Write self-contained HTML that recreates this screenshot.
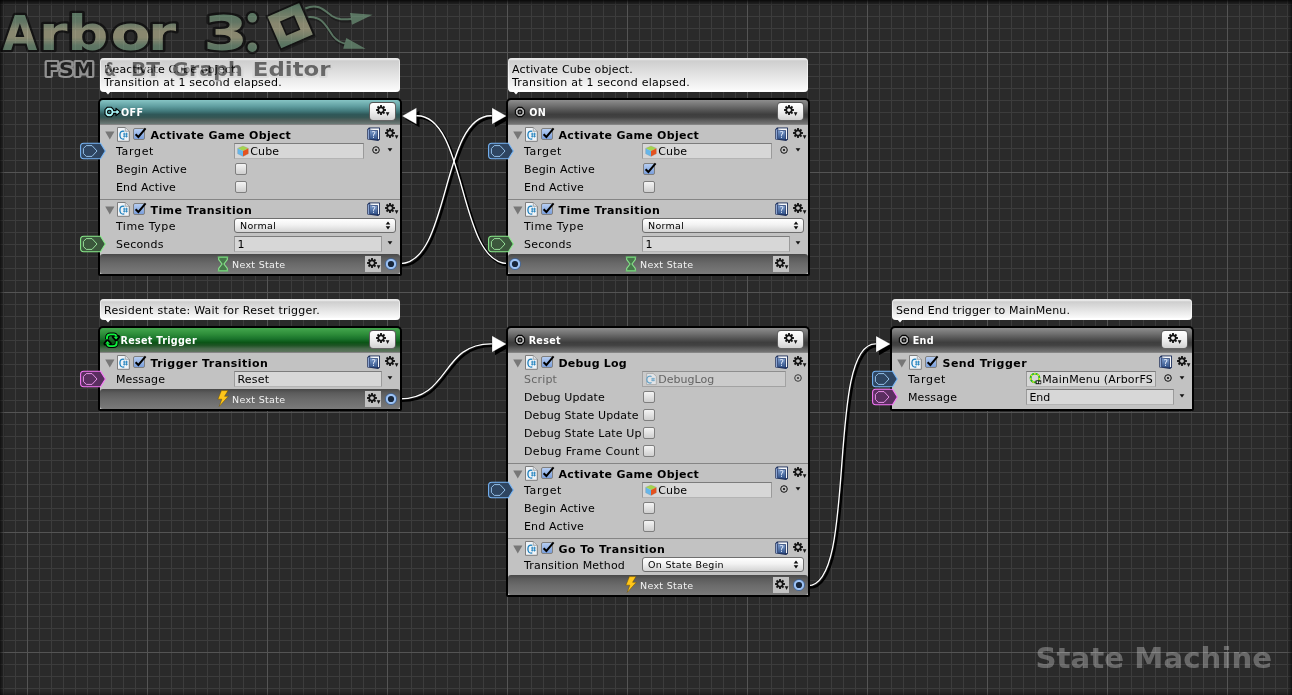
<!DOCTYPE html>
<html lang="en"><head><meta charset="utf-8"><title>Arbor 3 - State Machine</title>
<style>
html,body{margin:0;padding:0;}
body{width:1292px;height:695px;overflow:hidden;background:#2a2a2a;font-family:"DejaVu Sans","Liberation Sans",sans-serif;font-size:11px;color:#000;position:relative;}
#grid{position:absolute;left:0;top:0;width:1292px;height:695px;
 background-color:#2a2a2a;
 background-image:
  linear-gradient(to right, #545454 1px, transparent 1px),
  linear-gradient(to bottom, #545454 1px, transparent 1px),
  linear-gradient(to right, #3c3c3c 1px, transparent 1px),
  linear-gradient(to bottom, #3c3c3c 1px, transparent 1px);
 background-size:120px 120px,120px 120px,12px 12px,12px 12px;
 background-position:27px 0,0 52px,3px 0,0 4px;
}
#vig{position:absolute;left:0;top:0;width:1292px;height:695px;pointer-events:none;background:linear-gradient(to bottom,rgba(0,0,0,0.78) 0,rgba(0,0,0,0.45) 2px,rgba(0,0,0,0) 6px),linear-gradient(to right,rgba(0,0,0,0.6) 0,rgba(0,0,0,0.3) 2px,rgba(0,0,0,0) 5px),linear-gradient(to left,rgba(0,0,0,0.55) 0,rgba(0,0,0,0.25) 2px,rgba(0,0,0,0) 5px),linear-gradient(to top,rgba(0,0,0,0.3) 0,rgba(0,0,0,0) 4px);}
#root{position:absolute;left:0;top:0;width:1292px;height:695px;will-change:transform;}
.abs{position:absolute;}
.node{position:absolute;background:#000;border-radius:5px 5px 2px 2px;}
.hdr{position:absolute;left:2px;top:2px;width:300px;height:24px;border-radius:3px 3px 0 0;}
.hdr.gray{background:linear-gradient(to bottom,#8e8e8e 0%,#6e6e6e 25%,#4b4b4b 50%,#3e3e3e 60%,#424242 72%,#5e5e5e 86%,#747474 100%);}
.hdr.teal{background:linear-gradient(to bottom,#86c4c4 0%,#62a0a2 25%,#427a7c 46%,#2f5859 60%,#355654 72%,#55625f 86%,#6c7a77 100%);}
.hdr.green{background:linear-gradient(to bottom,#44a64e 0%,#2e8e3a 25%,#19722b 46%,#0b5516 60%,#1d5323 72%,#496a4c 86%,#5f755f 100%);}
.ttl{position:absolute;top:0;height:24px;line-height:26.6px;color:#fff;font-size:9.6px;font-weight:bold;white-space:nowrap;letter-spacing:0.3px;}
.body{position:absolute;left:2px;top:26px;width:300px;background:#c2c2c2;}
.sep{position:absolute;left:0;width:300px;height:1px;background:#858585;}
.btitle{position:absolute;left:52.5px;font-size:11px;font-weight:bold;line-height:18px;height:18px;white-space:nowrap;letter-spacing:0.4px;}
.lbl{position:absolute;left:18px;font-size:11px;line-height:18px;height:18px;white-space:nowrap;}
.lbl.dis{color:#666;}
.fld{position:absolute;box-sizing:border-box;height:16px;border:1px solid #9a9a9a;border-top-color:#7c7c7c;border-bottom-color:#b4b4b4;background:#d7d7d7;font-size:11px;line-height:16px;white-space:nowrap;overflow:hidden;}
.fld.dis{color:#646464;background:#cbcbcb;border-color:#a2a2a2;border-top-color:#8e8e8e;}
.pop{position:absolute;box-sizing:border-box;height:15px;border:1px solid #6e6e6e;border-radius:3px;background:linear-gradient(to bottom,#ffffff 0%,#f2f2f2 45%,#d4d4d4 100%);font-size:9.5px;line-height:13px;white-space:nowrap;padding-left:5px;}
.cb{position:absolute;box-sizing:border-box;width:12px;height:12px;border:1px solid #7f7f7f;border-radius:2px;background:linear-gradient(to bottom,#f4f4f4,#cfcfcf);}
.cbb{position:absolute;box-sizing:border-box;width:12px;height:12px;border:1px solid #7f7f7f;border-radius:2px;background:linear-gradient(to bottom,#b5cdf2,#7a9fdc);}
.ftr{position:absolute;left:2px;width:300px;height:20px;border-radius:3px;background:linear-gradient(to bottom,#484848 0%,#5c5c5c 20%,#6a6a6a 50%,#7a7a7a 100%);}
.ftxt{position:absolute;top:0;height:20px;line-height:22px;font-size:9.5px;color:#f2f2f2;white-space:nowrap;}
.gbtn{position:absolute;box-sizing:border-box;width:27px;height:19px;border:1px solid rgba(0,0,0,0.6);border-radius:4px;background:linear-gradient(to bottom,#ffffff 0%,#f0f0f0 50%,#d2d2d2 100%);}
.gbox{position:absolute;width:16px;height:16px;background:#c2c2c2;}
.cmt{position:absolute;box-sizing:border-box;border-radius:4px;background:linear-gradient(to bottom,#e9e9e9 0,#e6e6e6 1.6px,#cecece 2.8px,#f9f9f9 calc(100% - 2.5px),#ffffff calc(100% - 1.5px),#fdfdfd 100%);border:0;box-shadow:inset 1px 0 0 rgba(255,255,255,0.55),inset -1px 0 0 rgba(255,255,255,0.55);font-size:11px;line-height:13px;white-space:nowrap;color:#000;}
.cmt span{position:absolute;left:4px;}
svg{position:absolute;overflow:visible;}
</style></head>
<body>
<div id="root">
<div id="grid"></div>
<svg class="abs" width="0" height="0" style="left:0;top:0"><defs><linearGradient id="hb" x1="0" y1="0" x2="0" y2="1"><stop offset="0" stop-color="#7d9ccb"/><stop offset="1" stop-color="#31528a"/></linearGradient></defs></svg>
<div class="cmt" style="left:100px;top:58px;width:300px;height:34px"><span style="top:5px;letter-spacing:0.107px">Deactivate Cube object.</span><span style="top:18px;letter-spacing:0.225px">Transition at 1 second elapsed.</span></div><svg class="abs" style="left:105px;top:91px" width="7" height="5" viewBox="0 0 7 5"><path d="M0 0 H6 L3 3.6 Z" fill="#fff"/></svg>
<div class="cmt" style="left:508px;top:58px;width:300px;height:34px"><span style="top:5px;letter-spacing:0.147px">Activate Cube object.</span><span style="top:18px;letter-spacing:0.225px">Transition at 1 second elapsed.</span></div><svg class="abs" style="left:513px;top:91px" width="7" height="5" viewBox="0 0 7 5"><path d="M0 0 H6 L3 3.6 Z" fill="#fff"/></svg>
<div class="cmt" style="left:100px;top:299px;width:300px;height:21px"><span style="top:5px;letter-spacing:0.242px">Resident state: Wait for Reset trigger.</span></div><svg class="abs" style="left:105px;top:319px" width="7" height="5" viewBox="0 0 7 5"><path d="M0 0 H6 L3 3.6 Z" fill="#fff"/></svg>
<div class="cmt" style="left:892px;top:299px;width:300px;height:21px"><span style="top:5px;letter-spacing:0.113px">Send End trigger to MainMenu.</span></div><svg class="abs" style="left:897px;top:319px" width="7" height="5" viewBox="0 0 7 5"><path d="M0 0 H6 L3 3.6 Z" fill="#fff"/></svg>
<svg class="abs" style="left:0;top:0" width="1292" height="695" viewBox="0 0 1292 695"><g transform="translate(1.9,2.1)" fill="none" stroke="#000" stroke-width="2.3"><path d="M400 263.6 C450 263.6 441 115.8 491 115.8 H493"/><path d="M508 263.6 C458 263.6 467 115.8 417 115.8 H415"/><path d="M400 398.8 C450 398.8 441 343.8 491 343.8 H493"/><path d="M808 585.6 C858 585.6 825.5 343.9 875.5 343.9 H877"/></g><g transform="translate(3,3)" fill="#000"><path d="M506.5 116 L492.0 107.8 V124.2 Z"/><path d="M402 116 L416.5 107.8 V124.2 Z"/><path d="M506.5 344 L492.0 335.8 V352.2 Z"/><path d="M890.5 344.1 L876.0 335.90000000000003 V352.3 Z"/></g><g fill="none" stroke="#000" stroke-width="2.4" opacity="0.45"><path d="M400 263.6 C450 263.6 441 115.8 491 115.8 H493"/><path d="M508 263.6 C458 263.6 467 115.8 417 115.8 H415"/><path d="M400 398.8 C450 398.8 441 343.8 491 343.8 H493"/><path d="M808 585.6 C858 585.6 825.5 343.9 875.5 343.9 H877"/></g><g fill="none" stroke="#fff" stroke-width="1.35"><path d="M400 263.6 C450 263.6 441 115.8 491 115.8 H493"/><path d="M508 263.6 C458 263.6 467 115.8 417 115.8 H415"/><path d="M400 398.8 C450 398.8 441 343.8 491 343.8 H493"/><path d="M808 585.6 C858 585.6 825.5 343.9 875.5 343.9 H877"/></g><g fill="#fff" stroke="#000" stroke-opacity="0.35" stroke-width="0.6"><path d="M506.5 116 L492.0 107.8 V124.2 Z"/><path d="M402 116 L416.5 107.8 V124.2 Z"/><path d="M506.5 344 L492.0 335.8 V352.2 Z"/><path d="M890.5 344.1 L876.0 335.90000000000003 V352.3 Z"/></g></svg>
<div class="node" style="left:98px;top:98px;width:304px;height:178px"><div class="hdr teal"></div><svg class="abs" style="left:5.5px;top:8px" width="18" height="12" viewBox="0 0 18 12"><path d="M3.4 1.2 H7.2 L9.6 3.6 V4.6 H12 V2.4 L16.4 6 L12 9.6 V7.4 H9.6 V8.4 L7.2 10.8 H3.4 L1 8.4 V3.6 Z" fill="#a6f3f5" stroke="#000" stroke-width="1.1" stroke-linejoin="round"/><circle cx="5.3" cy="6" r="1.8" fill="#3f8487" stroke="#000" stroke-width="1.1"/></svg><div class="ttl" style="left:23.1px;top:2px">OFF</div><div class="gbtn" style="left:271px;top:4px"></div><svg class="abs" style="left:276px;top:5px" width="18" height="16" viewBox="-7 -7 18 16"><g fill="#141414"><rect x="-0.95" y="-4.95" width="1.9" height="2.4" transform="rotate(0)"/><rect x="-0.95" y="-4.95" width="1.9" height="2.4" transform="rotate(45)"/><rect x="-0.95" y="-4.95" width="1.9" height="2.4" transform="rotate(90)"/><rect x="-0.95" y="-4.95" width="1.9" height="2.4" transform="rotate(135)"/><rect x="-0.95" y="-4.95" width="1.9" height="2.4" transform="rotate(180)"/><rect x="-0.95" y="-4.95" width="1.9" height="2.4" transform="rotate(225)"/><rect x="-0.95" y="-4.95" width="1.9" height="2.4" transform="rotate(270)"/><rect x="-0.95" y="-4.95" width="1.9" height="2.4" transform="rotate(315)"/></g><circle r="2.7" fill="none" stroke="#141414" stroke-width="1.7"/><path d="M4.8 2.2h3.6l-1.8 3.7z" fill="#141414"/></svg><div class="body" style="height:150px"></div><div class="sep" style="left:2px;top:26px"></div><svg class="abs" style="left:7px;top:33px" width="10" height="9" viewBox="0 0 10 9"><path d="M0.2 0.4 H9.4 L4.8 8.6 Z" fill="#777"/></svg><svg class="abs" style="left:19px;top:29px" width="13" height="15" viewBox="0 0 13 15"><path d="M0.5 0.5 H8.3 L12.3 4.3 V14.3 H0.5 Z" fill="#eff3f7" stroke="#7e7e7e" stroke-width="1"/><path d="M8.3 0.6 V4.3 H12.2" fill="#dde2e8" stroke="#9a9a9a" stroke-width="0.8"/><path d="M7.3 4.3 Q2.9 3.4 2.9 8 Q2.9 12.8 7.3 11.9" fill="none" stroke="#1b7fbd" stroke-width="1.3"/><path d="M7.3 5.7 V10.5 M9.5 5.7 V10.5 M6 7 H10.9 M6 9.2 H10.9" fill="none" stroke="#1b7fbd" stroke-width="0.8"/></svg><div class="cbb" style="left:35px;top:30px"></div><svg class="abs" style="left:35px;top:28px" width="15" height="15" viewBox="0 0 15 15"><path d="M2.6 8.2 L5.4 11 L12.6 2.4" fill="none" stroke="#000" stroke-width="2"/></svg><div class="btitle" style="top:29px;letter-spacing:0.3px">Activate Game Object</div><svg class="abs" style="left:268.6px;top:29px" width="14" height="15" viewBox="0 0 14 15"><path d="M2 0.5 H12.4 Q13 0.5 13 1.1 V12.6 L11.2 13.9 L0.9 12.6 Q0.3 12.5 0.3 11.9 V2.2 Z" fill="#1a2c58"/><path d="M3.2 1.4 H12.1 V12.1 H3.2 Z" fill="#f6f8fb"/><path d="M1.2 2.7 L2.5 1.7 V12.3 L1.2 11.9 Z" fill="#a9c6f3"/><path d="M2.5 2.7 L10.9 3.2 V13 L2.5 12.2 Z" fill="#1a2c58"/><path d="M3 3.3 L10.3 3.8 V12.4 L3 11.7 Z" fill="url(#hb)"/><text x="6.7" y="10.9" font-family="DejaVu Sans, sans-serif" font-size="8.2" fill="#e9effb" text-anchor="middle">?</text></svg><svg class="abs" style="left:285px;top:28px" width="18" height="16" viewBox="-7 -7 18 16"><g fill="#141414"><rect x="-0.95" y="-4.95" width="1.9" height="2.4" transform="rotate(0)"/><rect x="-0.95" y="-4.95" width="1.9" height="2.4" transform="rotate(45)"/><rect x="-0.95" y="-4.95" width="1.9" height="2.4" transform="rotate(90)"/><rect x="-0.95" y="-4.95" width="1.9" height="2.4" transform="rotate(135)"/><rect x="-0.95" y="-4.95" width="1.9" height="2.4" transform="rotate(180)"/><rect x="-0.95" y="-4.95" width="1.9" height="2.4" transform="rotate(225)"/><rect x="-0.95" y="-4.95" width="1.9" height="2.4" transform="rotate(270)"/><rect x="-0.95" y="-4.95" width="1.9" height="2.4" transform="rotate(315)"/></g><circle r="2.7" fill="none" stroke="#141414" stroke-width="1.7"/><path d="M4.8 2.2h3.6l-1.8 3.7z" fill="#141414"/></svg><div class="lbl" style="top:45px;letter-spacing:0.681px">Target</div><svg class="abs" style="left:-18px;top:44px" width="27" height="18" viewBox="0 0 27 18"><path d="M3.6 1.3 H20.5 L25.3 9 L20.5 16.7 H3.6 Q0.6 16.7 0.6 13.7 V4.3 Q0.6 1.3 3.6 1.3 Z" fill="#2e4561" stroke="#78b8fa" stroke-width="1.05"/><path d="M6.3 3.6 H12 L17 9 L12 14.4 H6.3 L3.4 11.5 V6.5 Z" fill="none" stroke="#a6d6ff" stroke-width="0.85"/></svg><div class="fld" style="left:136px;top:45px;width:130px"><svg class="abs" style="left:2px;top:1px" width="12" height="12" viewBox="0 0 12 12"><path d="M6 1 L11.4 3.3 L6 5.9 L0.6 3.3 Z" fill="#a4d44e"/><path d="M0.6 3.3 L6 5.9 V11.4 L0.6 8.7 Z" fill="#66b6ea"/><path d="M11.4 3.3 L6 5.9 V11.4 L11.4 8.7 Z" fill="#e4521f"/><path d="M6 1 L11.4 3.3 V8.7 L6 11.4 L0.6 8.7 V3.3 Z" fill="none" stroke="#8a8a8a" stroke-opacity="0.5" stroke-width="0.5"/></svg><span style="position:absolute;left:15.2px;top:0;letter-spacing:0.148px">Cube</span></div><svg class="abs" style="left:272.5px;top:47.4px" width="10" height="10" viewBox="-5 -5 10 10"><circle r="3.3" fill="none" stroke="#111" stroke-width="1"/><circle r="1.1" fill="#111"/></svg><svg class="abs" style="left:288.6px;top:49.6px" width="6" height="4" viewBox="0 0 6 4"><path d="M0.6 0.3 H5.4 L3 3.6 Z" fill="#111"/></svg><div class="lbl" style="top:63px;letter-spacing:0.177px">Begin Active</div><div class="cb" style="left:137px;top:65px"></div><div class="lbl" style="top:81px;letter-spacing:0.155px">End Active</div><div class="cb" style="left:137px;top:83px"></div><div class="sep" style="left:2px;top:101px"></div><svg class="abs" style="left:7px;top:108px" width="10" height="9" viewBox="0 0 10 9"><path d="M0.2 0.4 H9.4 L4.8 8.6 Z" fill="#777"/></svg><svg class="abs" style="left:19px;top:104px" width="13" height="15" viewBox="0 0 13 15"><path d="M0.5 0.5 H8.3 L12.3 4.3 V14.3 H0.5 Z" fill="#eff3f7" stroke="#7e7e7e" stroke-width="1"/><path d="M8.3 0.6 V4.3 H12.2" fill="#dde2e8" stroke="#9a9a9a" stroke-width="0.8"/><path d="M7.3 4.3 Q2.9 3.4 2.9 8 Q2.9 12.8 7.3 11.9" fill="none" stroke="#1b7fbd" stroke-width="1.3"/><path d="M7.3 5.7 V10.5 M9.5 5.7 V10.5 M6 7 H10.9 M6 9.2 H10.9" fill="none" stroke="#1b7fbd" stroke-width="0.8"/></svg><div class="cbb" style="left:35px;top:105px"></div><svg class="abs" style="left:35px;top:103px" width="15" height="15" viewBox="0 0 15 15"><path d="M2.6 8.2 L5.4 11 L12.6 2.4" fill="none" stroke="#000" stroke-width="2"/></svg><div class="btitle" style="top:104px;letter-spacing:0.4px">Time Transition</div><svg class="abs" style="left:268.6px;top:104px" width="14" height="15" viewBox="0 0 14 15"><path d="M2 0.5 H12.4 Q13 0.5 13 1.1 V12.6 L11.2 13.9 L0.9 12.6 Q0.3 12.5 0.3 11.9 V2.2 Z" fill="#1a2c58"/><path d="M3.2 1.4 H12.1 V12.1 H3.2 Z" fill="#f6f8fb"/><path d="M1.2 2.7 L2.5 1.7 V12.3 L1.2 11.9 Z" fill="#a9c6f3"/><path d="M2.5 2.7 L10.9 3.2 V13 L2.5 12.2 Z" fill="#1a2c58"/><path d="M3 3.3 L10.3 3.8 V12.4 L3 11.7 Z" fill="url(#hb)"/><text x="6.7" y="10.9" font-family="DejaVu Sans, sans-serif" font-size="8.2" fill="#e9effb" text-anchor="middle">?</text></svg><svg class="abs" style="left:285px;top:103px" width="18" height="16" viewBox="-7 -7 18 16"><g fill="#141414"><rect x="-0.95" y="-4.95" width="1.9" height="2.4" transform="rotate(0)"/><rect x="-0.95" y="-4.95" width="1.9" height="2.4" transform="rotate(45)"/><rect x="-0.95" y="-4.95" width="1.9" height="2.4" transform="rotate(90)"/><rect x="-0.95" y="-4.95" width="1.9" height="2.4" transform="rotate(135)"/><rect x="-0.95" y="-4.95" width="1.9" height="2.4" transform="rotate(180)"/><rect x="-0.95" y="-4.95" width="1.9" height="2.4" transform="rotate(225)"/><rect x="-0.95" y="-4.95" width="1.9" height="2.4" transform="rotate(270)"/><rect x="-0.95" y="-4.95" width="1.9" height="2.4" transform="rotate(315)"/></g><circle r="2.7" fill="none" stroke="#141414" stroke-width="1.7"/><path d="M4.8 2.2h3.6l-1.8 3.7z" fill="#141414"/></svg><div class="lbl" style="top:120px;letter-spacing:0.479px">Time Type</div><div class="pop" style="left:136px;top:120px;width:162px;letter-spacing:0.3px">Normal</div><svg class="abs" style="left:287.2px;top:123.3px" width="6" height="9" viewBox="0 0 6 9"><path d="M0.7 3.6 H5.3 L3 0.4 Z M0.7 5.2 H5.3 L3 8.4 Z" fill="#0c0c0c"/></svg><div class="lbl" style="top:138px;letter-spacing:0.197px">Seconds</div><svg class="abs" style="left:-18px;top:137px" width="27" height="18" viewBox="0 0 27 18"><path d="M3.6 1.3 H20.5 L25.3 9 L20.5 16.7 H3.6 Q0.6 16.7 0.6 13.7 V4.3 Q0.6 1.3 3.6 1.3 Z" fill="#3b573c" stroke="#8aee8c" stroke-width="1.05"/><path d="M6.3 3.6 H12 L17 9 L12 14.4 H6.3 L3.4 11.5 V6.5 Z" fill="none" stroke="#a8f8aa" stroke-width="0.85"/></svg><div class="fld" style="left:136px;top:138px;width:148px"><span style="position:absolute;left:2.4px;top:0;letter-spacing:0.0px">1</span></div><svg class="abs" style="left:288.6px;top:142.6px" width="6" height="4" viewBox="0 0 6 4"><path d="M0.6 0.3 H5.4 L3 3.6 Z" fill="#111"/></svg><div class="ftr" style="top:156px"></div><svg class="abs" style="left:119px;top:157.5px" width="12" height="16" viewBox="0 0 12 16"><path d="M1.7 1.3 H10.3 V3.6 L6.9 8 L10.3 12.4 V14.7 H1.7 V12.4 L5.1 8 L1.7 3.6 Z" fill="#47794b" stroke="#86e68a" stroke-width="1.1" stroke-linejoin="round"/><path d="M0.6 1 H11.4 M0.6 15 H11.4" stroke="#62bd69" stroke-width="1"/></svg><div class="ftxt" style="left:134px;top:156px;letter-spacing:0.3px">Next State</div><div class="gbox" style="left:267px;top:158px"></div><svg class="abs" style="left:267px;top:158px" width="18" height="16" viewBox="-7 -7 18 16"><g fill="#141414"><rect x="-0.95" y="-4.95" width="1.9" height="2.4" transform="rotate(0)"/><rect x="-0.95" y="-4.95" width="1.9" height="2.4" transform="rotate(45)"/><rect x="-0.95" y="-4.95" width="1.9" height="2.4" transform="rotate(90)"/><rect x="-0.95" y="-4.95" width="1.9" height="2.4" transform="rotate(135)"/><rect x="-0.95" y="-4.95" width="1.9" height="2.4" transform="rotate(180)"/><rect x="-0.95" y="-4.95" width="1.9" height="2.4" transform="rotate(225)"/><rect x="-0.95" y="-4.95" width="1.9" height="2.4" transform="rotate(270)"/><rect x="-0.95" y="-4.95" width="1.9" height="2.4" transform="rotate(315)"/></g><circle r="2.7" fill="none" stroke="#141414" stroke-width="1.7"/><path d="M4.8 2.2h3.6l-1.8 3.7z" fill="#141414"/></svg><svg class="abs" style="left:286px;top:159px" width="14" height="14" viewBox="-7 -7 14 14"><circle r="5.6" fill="#9dc3f5" stroke="#3a5a8a" stroke-width="0.8"/><circle r="3.1" fill="#18263a"/></svg></div>
<div class="node" style="left:506px;top:98px;width:304px;height:178px"><div class="hdr gray"></div><svg class="abs" style="left:8px;top:8px" width="12" height="12" viewBox="-6 -6 12 12"><polygon points="4.62,1.91 1.91,4.62 -1.91,4.62 -4.62,1.91 -4.62,-1.91 -1.91,-4.62 1.91,-4.62 4.62,-1.91" fill="#b6b6b6" stroke="#050505" stroke-width="1.1" stroke-linejoin="round"/><circle r="1.9" fill="#6e6e6e" stroke="#050505" stroke-width="1.2"/></svg><div class="ttl" style="left:23.2px;top:2px">ON</div><div class="gbtn" style="left:271px;top:4px"></div><svg class="abs" style="left:276px;top:5px" width="18" height="16" viewBox="-7 -7 18 16"><g fill="#141414"><rect x="-0.95" y="-4.95" width="1.9" height="2.4" transform="rotate(0)"/><rect x="-0.95" y="-4.95" width="1.9" height="2.4" transform="rotate(45)"/><rect x="-0.95" y="-4.95" width="1.9" height="2.4" transform="rotate(90)"/><rect x="-0.95" y="-4.95" width="1.9" height="2.4" transform="rotate(135)"/><rect x="-0.95" y="-4.95" width="1.9" height="2.4" transform="rotate(180)"/><rect x="-0.95" y="-4.95" width="1.9" height="2.4" transform="rotate(225)"/><rect x="-0.95" y="-4.95" width="1.9" height="2.4" transform="rotate(270)"/><rect x="-0.95" y="-4.95" width="1.9" height="2.4" transform="rotate(315)"/></g><circle r="2.7" fill="none" stroke="#141414" stroke-width="1.7"/><path d="M4.8 2.2h3.6l-1.8 3.7z" fill="#141414"/></svg><div class="body" style="height:150px"></div><div class="sep" style="left:2px;top:26px"></div><svg class="abs" style="left:7px;top:33px" width="10" height="9" viewBox="0 0 10 9"><path d="M0.2 0.4 H9.4 L4.8 8.6 Z" fill="#777"/></svg><svg class="abs" style="left:19px;top:29px" width="13" height="15" viewBox="0 0 13 15"><path d="M0.5 0.5 H8.3 L12.3 4.3 V14.3 H0.5 Z" fill="#eff3f7" stroke="#7e7e7e" stroke-width="1"/><path d="M8.3 0.6 V4.3 H12.2" fill="#dde2e8" stroke="#9a9a9a" stroke-width="0.8"/><path d="M7.3 4.3 Q2.9 3.4 2.9 8 Q2.9 12.8 7.3 11.9" fill="none" stroke="#1b7fbd" stroke-width="1.3"/><path d="M7.3 5.7 V10.5 M9.5 5.7 V10.5 M6 7 H10.9 M6 9.2 H10.9" fill="none" stroke="#1b7fbd" stroke-width="0.8"/></svg><div class="cbb" style="left:35px;top:30px"></div><svg class="abs" style="left:35px;top:28px" width="15" height="15" viewBox="0 0 15 15"><path d="M2.6 8.2 L5.4 11 L12.6 2.4" fill="none" stroke="#000" stroke-width="2"/></svg><div class="btitle" style="top:29px;letter-spacing:0.3px">Activate Game Object</div><svg class="abs" style="left:268.6px;top:29px" width="14" height="15" viewBox="0 0 14 15"><path d="M2 0.5 H12.4 Q13 0.5 13 1.1 V12.6 L11.2 13.9 L0.9 12.6 Q0.3 12.5 0.3 11.9 V2.2 Z" fill="#1a2c58"/><path d="M3.2 1.4 H12.1 V12.1 H3.2 Z" fill="#f6f8fb"/><path d="M1.2 2.7 L2.5 1.7 V12.3 L1.2 11.9 Z" fill="#a9c6f3"/><path d="M2.5 2.7 L10.9 3.2 V13 L2.5 12.2 Z" fill="#1a2c58"/><path d="M3 3.3 L10.3 3.8 V12.4 L3 11.7 Z" fill="url(#hb)"/><text x="6.7" y="10.9" font-family="DejaVu Sans, sans-serif" font-size="8.2" fill="#e9effb" text-anchor="middle">?</text></svg><svg class="abs" style="left:285px;top:28px" width="18" height="16" viewBox="-7 -7 18 16"><g fill="#141414"><rect x="-0.95" y="-4.95" width="1.9" height="2.4" transform="rotate(0)"/><rect x="-0.95" y="-4.95" width="1.9" height="2.4" transform="rotate(45)"/><rect x="-0.95" y="-4.95" width="1.9" height="2.4" transform="rotate(90)"/><rect x="-0.95" y="-4.95" width="1.9" height="2.4" transform="rotate(135)"/><rect x="-0.95" y="-4.95" width="1.9" height="2.4" transform="rotate(180)"/><rect x="-0.95" y="-4.95" width="1.9" height="2.4" transform="rotate(225)"/><rect x="-0.95" y="-4.95" width="1.9" height="2.4" transform="rotate(270)"/><rect x="-0.95" y="-4.95" width="1.9" height="2.4" transform="rotate(315)"/></g><circle r="2.7" fill="none" stroke="#141414" stroke-width="1.7"/><path d="M4.8 2.2h3.6l-1.8 3.7z" fill="#141414"/></svg><div class="lbl" style="top:45px;letter-spacing:0.681px">Target</div><svg class="abs" style="left:-18px;top:44px" width="27" height="18" viewBox="0 0 27 18"><path d="M3.6 1.3 H20.5 L25.3 9 L20.5 16.7 H3.6 Q0.6 16.7 0.6 13.7 V4.3 Q0.6 1.3 3.6 1.3 Z" fill="#2e4561" stroke="#78b8fa" stroke-width="1.05"/><path d="M6.3 3.6 H12 L17 9 L12 14.4 H6.3 L3.4 11.5 V6.5 Z" fill="none" stroke="#a6d6ff" stroke-width="0.85"/></svg><div class="fld" style="left:136px;top:45px;width:130px"><svg class="abs" style="left:2px;top:1px" width="12" height="12" viewBox="0 0 12 12"><path d="M6 1 L11.4 3.3 L6 5.9 L0.6 3.3 Z" fill="#a4d44e"/><path d="M0.6 3.3 L6 5.9 V11.4 L0.6 8.7 Z" fill="#66b6ea"/><path d="M11.4 3.3 L6 5.9 V11.4 L11.4 8.7 Z" fill="#e4521f"/><path d="M6 1 L11.4 3.3 V8.7 L6 11.4 L0.6 8.7 V3.3 Z" fill="none" stroke="#8a8a8a" stroke-opacity="0.5" stroke-width="0.5"/></svg><span style="position:absolute;left:15.2px;top:0;letter-spacing:0.148px">Cube</span></div><svg class="abs" style="left:272.5px;top:47.4px" width="10" height="10" viewBox="-5 -5 10 10"><circle r="3.3" fill="none" stroke="#111" stroke-width="1"/><circle r="1.1" fill="#111"/></svg><svg class="abs" style="left:288.6px;top:49.6px" width="6" height="4" viewBox="0 0 6 4"><path d="M0.6 0.3 H5.4 L3 3.6 Z" fill="#111"/></svg><div class="lbl" style="top:63px;letter-spacing:0.177px">Begin Active</div><div class="cbb" style="left:137px;top:65px"></div><svg class="abs" style="left:137px;top:63px" width="15" height="15" viewBox="0 0 15 15"><path d="M2.6 8.2 L5.4 11 L12.6 2.4" fill="none" stroke="#000" stroke-width="2"/></svg><div class="lbl" style="top:81px;letter-spacing:0.155px">End Active</div><div class="cb" style="left:137px;top:83px"></div><div class="sep" style="left:2px;top:101px"></div><svg class="abs" style="left:7px;top:108px" width="10" height="9" viewBox="0 0 10 9"><path d="M0.2 0.4 H9.4 L4.8 8.6 Z" fill="#777"/></svg><svg class="abs" style="left:19px;top:104px" width="13" height="15" viewBox="0 0 13 15"><path d="M0.5 0.5 H8.3 L12.3 4.3 V14.3 H0.5 Z" fill="#eff3f7" stroke="#7e7e7e" stroke-width="1"/><path d="M8.3 0.6 V4.3 H12.2" fill="#dde2e8" stroke="#9a9a9a" stroke-width="0.8"/><path d="M7.3 4.3 Q2.9 3.4 2.9 8 Q2.9 12.8 7.3 11.9" fill="none" stroke="#1b7fbd" stroke-width="1.3"/><path d="M7.3 5.7 V10.5 M9.5 5.7 V10.5 M6 7 H10.9 M6 9.2 H10.9" fill="none" stroke="#1b7fbd" stroke-width="0.8"/></svg><div class="cbb" style="left:35px;top:105px"></div><svg class="abs" style="left:35px;top:103px" width="15" height="15" viewBox="0 0 15 15"><path d="M2.6 8.2 L5.4 11 L12.6 2.4" fill="none" stroke="#000" stroke-width="2"/></svg><div class="btitle" style="top:104px;letter-spacing:0.4px">Time Transition</div><svg class="abs" style="left:268.6px;top:104px" width="14" height="15" viewBox="0 0 14 15"><path d="M2 0.5 H12.4 Q13 0.5 13 1.1 V12.6 L11.2 13.9 L0.9 12.6 Q0.3 12.5 0.3 11.9 V2.2 Z" fill="#1a2c58"/><path d="M3.2 1.4 H12.1 V12.1 H3.2 Z" fill="#f6f8fb"/><path d="M1.2 2.7 L2.5 1.7 V12.3 L1.2 11.9 Z" fill="#a9c6f3"/><path d="M2.5 2.7 L10.9 3.2 V13 L2.5 12.2 Z" fill="#1a2c58"/><path d="M3 3.3 L10.3 3.8 V12.4 L3 11.7 Z" fill="url(#hb)"/><text x="6.7" y="10.9" font-family="DejaVu Sans, sans-serif" font-size="8.2" fill="#e9effb" text-anchor="middle">?</text></svg><svg class="abs" style="left:285px;top:103px" width="18" height="16" viewBox="-7 -7 18 16"><g fill="#141414"><rect x="-0.95" y="-4.95" width="1.9" height="2.4" transform="rotate(0)"/><rect x="-0.95" y="-4.95" width="1.9" height="2.4" transform="rotate(45)"/><rect x="-0.95" y="-4.95" width="1.9" height="2.4" transform="rotate(90)"/><rect x="-0.95" y="-4.95" width="1.9" height="2.4" transform="rotate(135)"/><rect x="-0.95" y="-4.95" width="1.9" height="2.4" transform="rotate(180)"/><rect x="-0.95" y="-4.95" width="1.9" height="2.4" transform="rotate(225)"/><rect x="-0.95" y="-4.95" width="1.9" height="2.4" transform="rotate(270)"/><rect x="-0.95" y="-4.95" width="1.9" height="2.4" transform="rotate(315)"/></g><circle r="2.7" fill="none" stroke="#141414" stroke-width="1.7"/><path d="M4.8 2.2h3.6l-1.8 3.7z" fill="#141414"/></svg><div class="lbl" style="top:120px;letter-spacing:0.479px">Time Type</div><div class="pop" style="left:136px;top:120px;width:162px;letter-spacing:0.3px">Normal</div><svg class="abs" style="left:287.2px;top:123.3px" width="6" height="9" viewBox="0 0 6 9"><path d="M0.7 3.6 H5.3 L3 0.4 Z M0.7 5.2 H5.3 L3 8.4 Z" fill="#0c0c0c"/></svg><div class="lbl" style="top:138px;letter-spacing:0.197px">Seconds</div><svg class="abs" style="left:-18px;top:137px" width="27" height="18" viewBox="0 0 27 18"><path d="M3.6 1.3 H20.5 L25.3 9 L20.5 16.7 H3.6 Q0.6 16.7 0.6 13.7 V4.3 Q0.6 1.3 3.6 1.3 Z" fill="#3b573c" stroke="#8aee8c" stroke-width="1.05"/><path d="M6.3 3.6 H12 L17 9 L12 14.4 H6.3 L3.4 11.5 V6.5 Z" fill="none" stroke="#a8f8aa" stroke-width="0.85"/></svg><div class="fld" style="left:136px;top:138px;width:148px"><span style="position:absolute;left:2.4px;top:0;letter-spacing:0.0px">1</span></div><svg class="abs" style="left:288.6px;top:142.6px" width="6" height="4" viewBox="0 0 6 4"><path d="M0.6 0.3 H5.4 L3 3.6 Z" fill="#111"/></svg><div class="ftr" style="top:156px"></div><svg class="abs" style="left:119px;top:157.5px" width="12" height="16" viewBox="0 0 12 16"><path d="M1.7 1.3 H10.3 V3.6 L6.9 8 L10.3 12.4 V14.7 H1.7 V12.4 L5.1 8 L1.7 3.6 Z" fill="#47794b" stroke="#86e68a" stroke-width="1.1" stroke-linejoin="round"/><path d="M0.6 1 H11.4 M0.6 15 H11.4" stroke="#62bd69" stroke-width="1"/></svg><div class="ftxt" style="left:134px;top:156px;letter-spacing:0.3px">Next State</div><div class="gbox" style="left:267px;top:158px"></div><svg class="abs" style="left:267px;top:158px" width="18" height="16" viewBox="-7 -7 18 16"><g fill="#141414"><rect x="-0.95" y="-4.95" width="1.9" height="2.4" transform="rotate(0)"/><rect x="-0.95" y="-4.95" width="1.9" height="2.4" transform="rotate(45)"/><rect x="-0.95" y="-4.95" width="1.9" height="2.4" transform="rotate(90)"/><rect x="-0.95" y="-4.95" width="1.9" height="2.4" transform="rotate(135)"/><rect x="-0.95" y="-4.95" width="1.9" height="2.4" transform="rotate(180)"/><rect x="-0.95" y="-4.95" width="1.9" height="2.4" transform="rotate(225)"/><rect x="-0.95" y="-4.95" width="1.9" height="2.4" transform="rotate(270)"/><rect x="-0.95" y="-4.95" width="1.9" height="2.4" transform="rotate(315)"/></g><circle r="2.7" fill="none" stroke="#141414" stroke-width="1.7"/><path d="M4.8 2.2h3.6l-1.8 3.7z" fill="#141414"/></svg><svg class="abs" style="left:2px;top:159px" width="14" height="14" viewBox="-7 -7 14 14"><circle r="5.6" fill="#9dc3f5" stroke="#3a5a8a" stroke-width="0.8"/><circle r="3.1" fill="#18263a"/></svg></div>
<div class="node" style="left:98px;top:326px;width:304px;height:85px"><div class="hdr green"></div><svg class="abs" style="left:5.8px;top:5.8px" width="15.6" height="16.5" viewBox="0 0 17 18"><g fill="none" stroke="#000" stroke-width="4" stroke-linejoin="round"><path d="M3.2 8 V6.6 Q3.2 2.6 7.2 2.6 H10.6 Q13 2.6 13.4 5"/><path d="M13.8 10 V11.4 Q13.8 15.4 9.8 15.4 H6.4 Q4 15.4 3.6 13"/><path d="M10.4 5.2 H15.6 L13.2 8.2 Z M6.6 12.8 H1.4 L3.8 9.8 Z"/></g><g fill="none" stroke="#0cf23c" stroke-width="2.1"><path d="M3.2 8 V6.6 Q3.2 2.6 7.2 2.6 H10.6 Q13 2.6 13.4 5"/><path d="M13.8 10 V11.4 Q13.8 15.4 9.8 15.4 H6.4 Q4 15.4 3.6 13"/></g><path d="M10.4 5.2 H15.6 L13.2 8.2 Z M6.6 12.8 H1.4 L3.8 9.8 Z" fill="#0cf23c"/></svg><div class="ttl" style="left:22.5px;top:2px">Reset Trigger</div><div class="gbtn" style="left:271px;top:4px"></div><svg class="abs" style="left:276px;top:5px" width="18" height="16" viewBox="-7 -7 18 16"><g fill="#141414"><rect x="-0.95" y="-4.95" width="1.9" height="2.4" transform="rotate(0)"/><rect x="-0.95" y="-4.95" width="1.9" height="2.4" transform="rotate(45)"/><rect x="-0.95" y="-4.95" width="1.9" height="2.4" transform="rotate(90)"/><rect x="-0.95" y="-4.95" width="1.9" height="2.4" transform="rotate(135)"/><rect x="-0.95" y="-4.95" width="1.9" height="2.4" transform="rotate(180)"/><rect x="-0.95" y="-4.95" width="1.9" height="2.4" transform="rotate(225)"/><rect x="-0.95" y="-4.95" width="1.9" height="2.4" transform="rotate(270)"/><rect x="-0.95" y="-4.95" width="1.9" height="2.4" transform="rotate(315)"/></g><circle r="2.7" fill="none" stroke="#141414" stroke-width="1.7"/><path d="M4.8 2.2h3.6l-1.8 3.7z" fill="#141414"/></svg><div class="body" style="height:57px"></div><div class="sep" style="left:2px;top:26px"></div><svg class="abs" style="left:7px;top:33px" width="10" height="9" viewBox="0 0 10 9"><path d="M0.2 0.4 H9.4 L4.8 8.6 Z" fill="#777"/></svg><svg class="abs" style="left:19px;top:29px" width="13" height="15" viewBox="0 0 13 15"><path d="M0.5 0.5 H8.3 L12.3 4.3 V14.3 H0.5 Z" fill="#eff3f7" stroke="#7e7e7e" stroke-width="1"/><path d="M8.3 0.6 V4.3 H12.2" fill="#dde2e8" stroke="#9a9a9a" stroke-width="0.8"/><path d="M7.3 4.3 Q2.9 3.4 2.9 8 Q2.9 12.8 7.3 11.9" fill="none" stroke="#1b7fbd" stroke-width="1.3"/><path d="M7.3 5.7 V10.5 M9.5 5.7 V10.5 M6 7 H10.9 M6 9.2 H10.9" fill="none" stroke="#1b7fbd" stroke-width="0.8"/></svg><div class="cbb" style="left:35px;top:30px"></div><svg class="abs" style="left:35px;top:28px" width="15" height="15" viewBox="0 0 15 15"><path d="M2.6 8.2 L5.4 11 L12.6 2.4" fill="none" stroke="#000" stroke-width="2"/></svg><div class="btitle" style="top:29px;letter-spacing:0.45px">Trigger Transition</div><svg class="abs" style="left:268.6px;top:29px" width="14" height="15" viewBox="0 0 14 15"><path d="M2 0.5 H12.4 Q13 0.5 13 1.1 V12.6 L11.2 13.9 L0.9 12.6 Q0.3 12.5 0.3 11.9 V2.2 Z" fill="#1a2c58"/><path d="M3.2 1.4 H12.1 V12.1 H3.2 Z" fill="#f6f8fb"/><path d="M1.2 2.7 L2.5 1.7 V12.3 L1.2 11.9 Z" fill="#a9c6f3"/><path d="M2.5 2.7 L10.9 3.2 V13 L2.5 12.2 Z" fill="#1a2c58"/><path d="M3 3.3 L10.3 3.8 V12.4 L3 11.7 Z" fill="url(#hb)"/><text x="6.7" y="10.9" font-family="DejaVu Sans, sans-serif" font-size="8.2" fill="#e9effb" text-anchor="middle">?</text></svg><svg class="abs" style="left:285px;top:28px" width="18" height="16" viewBox="-7 -7 18 16"><g fill="#141414"><rect x="-0.95" y="-4.95" width="1.9" height="2.4" transform="rotate(0)"/><rect x="-0.95" y="-4.95" width="1.9" height="2.4" transform="rotate(45)"/><rect x="-0.95" y="-4.95" width="1.9" height="2.4" transform="rotate(90)"/><rect x="-0.95" y="-4.95" width="1.9" height="2.4" transform="rotate(135)"/><rect x="-0.95" y="-4.95" width="1.9" height="2.4" transform="rotate(180)"/><rect x="-0.95" y="-4.95" width="1.9" height="2.4" transform="rotate(225)"/><rect x="-0.95" y="-4.95" width="1.9" height="2.4" transform="rotate(270)"/><rect x="-0.95" y="-4.95" width="1.9" height="2.4" transform="rotate(315)"/></g><circle r="2.7" fill="none" stroke="#141414" stroke-width="1.7"/><path d="M4.8 2.2h3.6l-1.8 3.7z" fill="#141414"/></svg><div class="lbl" style="top:45px;letter-spacing:0.114px">Message</div><svg class="abs" style="left:-18px;top:44px" width="27" height="18" viewBox="0 0 27 18"><path d="M3.6 1.3 H20.5 L25.3 9 L20.5 16.7 H3.6 Q0.6 16.7 0.6 13.7 V4.3 Q0.6 1.3 3.6 1.3 Z" fill="#5a2e60" stroke="#fb78fc" stroke-width="1.05"/><path d="M6.3 3.6 H12 L17 9 L12 14.4 H6.3 L3.4 11.5 V6.5 Z" fill="none" stroke="#ffa4ff" stroke-width="0.85"/></svg><div class="fld" style="left:136px;top:45px;width:148px"><span style="position:absolute;left:2.4px;top:0;letter-spacing:0.256px">Reset</span></div><svg class="abs" style="left:288.6px;top:49.6px" width="6" height="4" viewBox="0 0 6 4"><path d="M0.6 0.3 H5.4 L3 3.6 Z" fill="#111"/></svg><div class="ftr" style="top:63px"></div><svg class="abs" style="left:119px;top:64px" width="12" height="17" viewBox="0 0 12 17"><path d="M4.4 0.6 H11 L7.6 6.3 H11.4 L2.2 16.4 L4.8 9.2 H0.9 Z" fill="#ffc61a" stroke="#6a4e00" stroke-width="0.5"/></svg><div class="ftxt" style="left:134px;top:63px;letter-spacing:0.3px">Next State</div><div class="gbox" style="left:267px;top:65px"></div><svg class="abs" style="left:267px;top:65px" width="18" height="16" viewBox="-7 -7 18 16"><g fill="#141414"><rect x="-0.95" y="-4.95" width="1.9" height="2.4" transform="rotate(0)"/><rect x="-0.95" y="-4.95" width="1.9" height="2.4" transform="rotate(45)"/><rect x="-0.95" y="-4.95" width="1.9" height="2.4" transform="rotate(90)"/><rect x="-0.95" y="-4.95" width="1.9" height="2.4" transform="rotate(135)"/><rect x="-0.95" y="-4.95" width="1.9" height="2.4" transform="rotate(180)"/><rect x="-0.95" y="-4.95" width="1.9" height="2.4" transform="rotate(225)"/><rect x="-0.95" y="-4.95" width="1.9" height="2.4" transform="rotate(270)"/><rect x="-0.95" y="-4.95" width="1.9" height="2.4" transform="rotate(315)"/></g><circle r="2.7" fill="none" stroke="#141414" stroke-width="1.7"/><path d="M4.8 2.2h3.6l-1.8 3.7z" fill="#141414"/></svg><svg class="abs" style="left:286px;top:66px" width="14" height="14" viewBox="-7 -7 14 14"><circle r="5.6" fill="#9dc3f5" stroke="#3a5a8a" stroke-width="0.8"/><circle r="3.1" fill="#18263a"/></svg></div>
<div class="node" style="left:506px;top:326px;width:304px;height:271px"><div class="hdr gray"></div><svg class="abs" style="left:8px;top:8px" width="12" height="12" viewBox="-6 -6 12 12"><polygon points="4.62,1.91 1.91,4.62 -1.91,4.62 -4.62,1.91 -4.62,-1.91 -1.91,-4.62 1.91,-4.62 4.62,-1.91" fill="#b6b6b6" stroke="#050505" stroke-width="1.1" stroke-linejoin="round"/><circle r="1.9" fill="#6e6e6e" stroke="#050505" stroke-width="1.2"/></svg><div class="ttl" style="left:22.7px;top:2px">Reset</div><div class="gbtn" style="left:271px;top:4px"></div><svg class="abs" style="left:276px;top:5px" width="18" height="16" viewBox="-7 -7 18 16"><g fill="#141414"><rect x="-0.95" y="-4.95" width="1.9" height="2.4" transform="rotate(0)"/><rect x="-0.95" y="-4.95" width="1.9" height="2.4" transform="rotate(45)"/><rect x="-0.95" y="-4.95" width="1.9" height="2.4" transform="rotate(90)"/><rect x="-0.95" y="-4.95" width="1.9" height="2.4" transform="rotate(135)"/><rect x="-0.95" y="-4.95" width="1.9" height="2.4" transform="rotate(180)"/><rect x="-0.95" y="-4.95" width="1.9" height="2.4" transform="rotate(225)"/><rect x="-0.95" y="-4.95" width="1.9" height="2.4" transform="rotate(270)"/><rect x="-0.95" y="-4.95" width="1.9" height="2.4" transform="rotate(315)"/></g><circle r="2.7" fill="none" stroke="#141414" stroke-width="1.7"/><path d="M4.8 2.2h3.6l-1.8 3.7z" fill="#141414"/></svg><div class="body" style="height:243px"></div><div class="sep" style="left:2px;top:26px"></div><svg class="abs" style="left:7px;top:33px" width="10" height="9" viewBox="0 0 10 9"><path d="M0.2 0.4 H9.4 L4.8 8.6 Z" fill="#777"/></svg><svg class="abs" style="left:19px;top:29px" width="13" height="15" viewBox="0 0 13 15"><path d="M0.5 0.5 H8.3 L12.3 4.3 V14.3 H0.5 Z" fill="#eff3f7" stroke="#7e7e7e" stroke-width="1"/><path d="M8.3 0.6 V4.3 H12.2" fill="#dde2e8" stroke="#9a9a9a" stroke-width="0.8"/><path d="M7.3 4.3 Q2.9 3.4 2.9 8 Q2.9 12.8 7.3 11.9" fill="none" stroke="#1b7fbd" stroke-width="1.3"/><path d="M7.3 5.7 V10.5 M9.5 5.7 V10.5 M6 7 H10.9 M6 9.2 H10.9" fill="none" stroke="#1b7fbd" stroke-width="0.8"/></svg><div class="cbb" style="left:35px;top:30px"></div><svg class="abs" style="left:35px;top:28px" width="15" height="15" viewBox="0 0 15 15"><path d="M2.6 8.2 L5.4 11 L12.6 2.4" fill="none" stroke="#000" stroke-width="2"/></svg><div class="btitle" style="top:29px;letter-spacing:0.21px">Debug Log</div><svg class="abs" style="left:268.6px;top:29px" width="14" height="15" viewBox="0 0 14 15"><path d="M2 0.5 H12.4 Q13 0.5 13 1.1 V12.6 L11.2 13.9 L0.9 12.6 Q0.3 12.5 0.3 11.9 V2.2 Z" fill="#1a2c58"/><path d="M3.2 1.4 H12.1 V12.1 H3.2 Z" fill="#f6f8fb"/><path d="M1.2 2.7 L2.5 1.7 V12.3 L1.2 11.9 Z" fill="#a9c6f3"/><path d="M2.5 2.7 L10.9 3.2 V13 L2.5 12.2 Z" fill="#1a2c58"/><path d="M3 3.3 L10.3 3.8 V12.4 L3 11.7 Z" fill="url(#hb)"/><text x="6.7" y="10.9" font-family="DejaVu Sans, sans-serif" font-size="8.2" fill="#e9effb" text-anchor="middle">?</text></svg><svg class="abs" style="left:285px;top:28px" width="18" height="16" viewBox="-7 -7 18 16"><g fill="#141414"><rect x="-0.95" y="-4.95" width="1.9" height="2.4" transform="rotate(0)"/><rect x="-0.95" y="-4.95" width="1.9" height="2.4" transform="rotate(45)"/><rect x="-0.95" y="-4.95" width="1.9" height="2.4" transform="rotate(90)"/><rect x="-0.95" y="-4.95" width="1.9" height="2.4" transform="rotate(135)"/><rect x="-0.95" y="-4.95" width="1.9" height="2.4" transform="rotate(180)"/><rect x="-0.95" y="-4.95" width="1.9" height="2.4" transform="rotate(225)"/><rect x="-0.95" y="-4.95" width="1.9" height="2.4" transform="rotate(270)"/><rect x="-0.95" y="-4.95" width="1.9" height="2.4" transform="rotate(315)"/></g><circle r="2.7" fill="none" stroke="#141414" stroke-width="1.7"/><path d="M4.8 2.2h3.6l-1.8 3.7z" fill="#141414"/></svg><div class="lbl dis" style="top:45px;letter-spacing:0.199px">Script</div><div class="fld dis" style="left:136px;top:45px;width:144px"><svg class="abs" style="left:3px;top:1px" width="11" height="12" viewBox="0 0 13 15" opacity="0.6"><path d="M0.5 0.5 H8.5 L12.5 4.2 V14.5 H0.5 Z" fill="#f3f6fa" stroke="#8a8a8a" stroke-width="1"/><path d="M6.6 4.4 A4.1 4.3 0 1 0 6.6 12" fill="none" stroke="#1f86c4" stroke-width="1.5"/><path d="M7.4 6 V10.4 M9.4 6 V10.4 M6.4 7.2 H10.6 M6.4 9.2 H10.6" fill="none" stroke="#1f86c4" stroke-width="0.9"/></svg><span style="position:absolute;left:15.2px;top:0;letter-spacing:0.021px">DebugLog</span></div><svg class="abs" style="left:286.5px;top:47.4px" width="10" height="10" viewBox="-5 -5 10 10"><circle r="3.3" fill="none" stroke="#3c3c3c" stroke-width="1"/><circle r="1.1" fill="#3c3c3c"/></svg><div class="lbl" style="top:63px;letter-spacing:0.108px">Debug Update</div><div class="cb" style="left:137px;top:65px"></div><div class="lbl" style="top:81px;letter-spacing:0.138px">Debug State Update</div><div class="cb" style="left:137px;top:83px"></div><div class="lbl" style="top:99px;letter-spacing:0.155px">Debug State Late Up</div><div class="cb" style="left:137px;top:101px"></div><div class="lbl" style="top:117px;letter-spacing:0.329px">Debug Frame Count</div><div class="cb" style="left:137px;top:119px"></div><div class="sep" style="left:2px;top:137px"></div><svg class="abs" style="left:7px;top:144px" width="10" height="9" viewBox="0 0 10 9"><path d="M0.2 0.4 H9.4 L4.8 8.6 Z" fill="#777"/></svg><svg class="abs" style="left:19px;top:140px" width="13" height="15" viewBox="0 0 13 15"><path d="M0.5 0.5 H8.3 L12.3 4.3 V14.3 H0.5 Z" fill="#eff3f7" stroke="#7e7e7e" stroke-width="1"/><path d="M8.3 0.6 V4.3 H12.2" fill="#dde2e8" stroke="#9a9a9a" stroke-width="0.8"/><path d="M7.3 4.3 Q2.9 3.4 2.9 8 Q2.9 12.8 7.3 11.9" fill="none" stroke="#1b7fbd" stroke-width="1.3"/><path d="M7.3 5.7 V10.5 M9.5 5.7 V10.5 M6 7 H10.9 M6 9.2 H10.9" fill="none" stroke="#1b7fbd" stroke-width="0.8"/></svg><div class="cbb" style="left:35px;top:141px"></div><svg class="abs" style="left:35px;top:139px" width="15" height="15" viewBox="0 0 15 15"><path d="M2.6 8.2 L5.4 11 L12.6 2.4" fill="none" stroke="#000" stroke-width="2"/></svg><div class="btitle" style="top:140px;letter-spacing:0.3px">Activate Game Object</div><svg class="abs" style="left:268.6px;top:140px" width="14" height="15" viewBox="0 0 14 15"><path d="M2 0.5 H12.4 Q13 0.5 13 1.1 V12.6 L11.2 13.9 L0.9 12.6 Q0.3 12.5 0.3 11.9 V2.2 Z" fill="#1a2c58"/><path d="M3.2 1.4 H12.1 V12.1 H3.2 Z" fill="#f6f8fb"/><path d="M1.2 2.7 L2.5 1.7 V12.3 L1.2 11.9 Z" fill="#a9c6f3"/><path d="M2.5 2.7 L10.9 3.2 V13 L2.5 12.2 Z" fill="#1a2c58"/><path d="M3 3.3 L10.3 3.8 V12.4 L3 11.7 Z" fill="url(#hb)"/><text x="6.7" y="10.9" font-family="DejaVu Sans, sans-serif" font-size="8.2" fill="#e9effb" text-anchor="middle">?</text></svg><svg class="abs" style="left:285px;top:139px" width="18" height="16" viewBox="-7 -7 18 16"><g fill="#141414"><rect x="-0.95" y="-4.95" width="1.9" height="2.4" transform="rotate(0)"/><rect x="-0.95" y="-4.95" width="1.9" height="2.4" transform="rotate(45)"/><rect x="-0.95" y="-4.95" width="1.9" height="2.4" transform="rotate(90)"/><rect x="-0.95" y="-4.95" width="1.9" height="2.4" transform="rotate(135)"/><rect x="-0.95" y="-4.95" width="1.9" height="2.4" transform="rotate(180)"/><rect x="-0.95" y="-4.95" width="1.9" height="2.4" transform="rotate(225)"/><rect x="-0.95" y="-4.95" width="1.9" height="2.4" transform="rotate(270)"/><rect x="-0.95" y="-4.95" width="1.9" height="2.4" transform="rotate(315)"/></g><circle r="2.7" fill="none" stroke="#141414" stroke-width="1.7"/><path d="M4.8 2.2h3.6l-1.8 3.7z" fill="#141414"/></svg><div class="lbl" style="top:156px;letter-spacing:0.681px">Target</div><svg class="abs" style="left:-18px;top:155px" width="27" height="18" viewBox="0 0 27 18"><path d="M3.6 1.3 H20.5 L25.3 9 L20.5 16.7 H3.6 Q0.6 16.7 0.6 13.7 V4.3 Q0.6 1.3 3.6 1.3 Z" fill="#2e4561" stroke="#78b8fa" stroke-width="1.05"/><path d="M6.3 3.6 H12 L17 9 L12 14.4 H6.3 L3.4 11.5 V6.5 Z" fill="none" stroke="#a6d6ff" stroke-width="0.85"/></svg><div class="fld" style="left:136px;top:156px;width:130px"><svg class="abs" style="left:2px;top:1px" width="12" height="12" viewBox="0 0 12 12"><path d="M6 1 L11.4 3.3 L6 5.9 L0.6 3.3 Z" fill="#a4d44e"/><path d="M0.6 3.3 L6 5.9 V11.4 L0.6 8.7 Z" fill="#66b6ea"/><path d="M11.4 3.3 L6 5.9 V11.4 L11.4 8.7 Z" fill="#e4521f"/><path d="M6 1 L11.4 3.3 V8.7 L6 11.4 L0.6 8.7 V3.3 Z" fill="none" stroke="#8a8a8a" stroke-opacity="0.5" stroke-width="0.5"/></svg><span style="position:absolute;left:15.2px;top:0;letter-spacing:0.148px">Cube</span></div><svg class="abs" style="left:272.5px;top:158.4px" width="10" height="10" viewBox="-5 -5 10 10"><circle r="3.3" fill="none" stroke="#111" stroke-width="1"/><circle r="1.1" fill="#111"/></svg><svg class="abs" style="left:288.6px;top:160.6px" width="6" height="4" viewBox="0 0 6 4"><path d="M0.6 0.3 H5.4 L3 3.6 Z" fill="#111"/></svg><div class="lbl" style="top:174px;letter-spacing:0.177px">Begin Active</div><div class="cb" style="left:137px;top:176px"></div><div class="lbl" style="top:192px;letter-spacing:0.155px">End Active</div><div class="cb" style="left:137px;top:194px"></div><div class="sep" style="left:2px;top:212px"></div><svg class="abs" style="left:7px;top:219px" width="10" height="9" viewBox="0 0 10 9"><path d="M0.2 0.4 H9.4 L4.8 8.6 Z" fill="#777"/></svg><svg class="abs" style="left:19px;top:215px" width="13" height="15" viewBox="0 0 13 15"><path d="M0.5 0.5 H8.3 L12.3 4.3 V14.3 H0.5 Z" fill="#eff3f7" stroke="#7e7e7e" stroke-width="1"/><path d="M8.3 0.6 V4.3 H12.2" fill="#dde2e8" stroke="#9a9a9a" stroke-width="0.8"/><path d="M7.3 4.3 Q2.9 3.4 2.9 8 Q2.9 12.8 7.3 11.9" fill="none" stroke="#1b7fbd" stroke-width="1.3"/><path d="M7.3 5.7 V10.5 M9.5 5.7 V10.5 M6 7 H10.9 M6 9.2 H10.9" fill="none" stroke="#1b7fbd" stroke-width="0.8"/></svg><div class="cbb" style="left:35px;top:216px"></div><svg class="abs" style="left:35px;top:214px" width="15" height="15" viewBox="0 0 15 15"><path d="M2.6 8.2 L5.4 11 L12.6 2.4" fill="none" stroke="#000" stroke-width="2"/></svg><div class="btitle" style="top:215px;letter-spacing:0.46px">Go To Transition</div><svg class="abs" style="left:268.6px;top:215px" width="14" height="15" viewBox="0 0 14 15"><path d="M2 0.5 H12.4 Q13 0.5 13 1.1 V12.6 L11.2 13.9 L0.9 12.6 Q0.3 12.5 0.3 11.9 V2.2 Z" fill="#1a2c58"/><path d="M3.2 1.4 H12.1 V12.1 H3.2 Z" fill="#f6f8fb"/><path d="M1.2 2.7 L2.5 1.7 V12.3 L1.2 11.9 Z" fill="#a9c6f3"/><path d="M2.5 2.7 L10.9 3.2 V13 L2.5 12.2 Z" fill="#1a2c58"/><path d="M3 3.3 L10.3 3.8 V12.4 L3 11.7 Z" fill="url(#hb)"/><text x="6.7" y="10.9" font-family="DejaVu Sans, sans-serif" font-size="8.2" fill="#e9effb" text-anchor="middle">?</text></svg><svg class="abs" style="left:285px;top:214px" width="18" height="16" viewBox="-7 -7 18 16"><g fill="#141414"><rect x="-0.95" y="-4.95" width="1.9" height="2.4" transform="rotate(0)"/><rect x="-0.95" y="-4.95" width="1.9" height="2.4" transform="rotate(45)"/><rect x="-0.95" y="-4.95" width="1.9" height="2.4" transform="rotate(90)"/><rect x="-0.95" y="-4.95" width="1.9" height="2.4" transform="rotate(135)"/><rect x="-0.95" y="-4.95" width="1.9" height="2.4" transform="rotate(180)"/><rect x="-0.95" y="-4.95" width="1.9" height="2.4" transform="rotate(225)"/><rect x="-0.95" y="-4.95" width="1.9" height="2.4" transform="rotate(270)"/><rect x="-0.95" y="-4.95" width="1.9" height="2.4" transform="rotate(315)"/></g><circle r="2.7" fill="none" stroke="#141414" stroke-width="1.7"/><path d="M4.8 2.2h3.6l-1.8 3.7z" fill="#141414"/></svg><div class="lbl" style="top:231px;letter-spacing:0.179px">Transition Method</div><div class="pop" style="left:136px;top:231px;width:162px;letter-spacing:0.3px">On State Begin</div><svg class="abs" style="left:287.2px;top:234.3px" width="6" height="9" viewBox="0 0 6 9"><path d="M0.7 3.6 H5.3 L3 0.4 Z M0.7 5.2 H5.3 L3 8.4 Z" fill="#0c0c0c"/></svg><div class="ftr" style="top:249px"></div><svg class="abs" style="left:119px;top:250px" width="12" height="17" viewBox="0 0 12 17"><path d="M4.4 0.6 H11 L7.6 6.3 H11.4 L2.2 16.4 L4.8 9.2 H0.9 Z" fill="#ffc61a" stroke="#6a4e00" stroke-width="0.5"/></svg><div class="ftxt" style="left:134px;top:249px;letter-spacing:0.3px">Next State</div><div class="gbox" style="left:267px;top:251px"></div><svg class="abs" style="left:267px;top:251px" width="18" height="16" viewBox="-7 -7 18 16"><g fill="#141414"><rect x="-0.95" y="-4.95" width="1.9" height="2.4" transform="rotate(0)"/><rect x="-0.95" y="-4.95" width="1.9" height="2.4" transform="rotate(45)"/><rect x="-0.95" y="-4.95" width="1.9" height="2.4" transform="rotate(90)"/><rect x="-0.95" y="-4.95" width="1.9" height="2.4" transform="rotate(135)"/><rect x="-0.95" y="-4.95" width="1.9" height="2.4" transform="rotate(180)"/><rect x="-0.95" y="-4.95" width="1.9" height="2.4" transform="rotate(225)"/><rect x="-0.95" y="-4.95" width="1.9" height="2.4" transform="rotate(270)"/><rect x="-0.95" y="-4.95" width="1.9" height="2.4" transform="rotate(315)"/></g><circle r="2.7" fill="none" stroke="#141414" stroke-width="1.7"/><path d="M4.8 2.2h3.6l-1.8 3.7z" fill="#141414"/></svg><svg class="abs" style="left:286px;top:252px" width="14" height="14" viewBox="-7 -7 14 14"><circle r="5.6" fill="#9dc3f5" stroke="#3a5a8a" stroke-width="0.8"/><circle r="3.1" fill="#18263a"/></svg></div>
<div class="node" style="left:890px;top:326px;width:304px;height:85px"><div class="hdr gray"></div><svg class="abs" style="left:8px;top:8px" width="12" height="12" viewBox="-6 -6 12 12"><polygon points="4.62,1.91 1.91,4.62 -1.91,4.62 -4.62,1.91 -4.62,-1.91 -1.91,-4.62 1.91,-4.62 4.62,-1.91" fill="#b6b6b6" stroke="#050505" stroke-width="1.1" stroke-linejoin="round"/><circle r="1.9" fill="#6e6e6e" stroke="#050505" stroke-width="1.2"/></svg><div class="ttl" style="left:22.7px;top:2px">End</div><div class="gbtn" style="left:271px;top:4px"></div><svg class="abs" style="left:276px;top:5px" width="18" height="16" viewBox="-7 -7 18 16"><g fill="#141414"><rect x="-0.95" y="-4.95" width="1.9" height="2.4" transform="rotate(0)"/><rect x="-0.95" y="-4.95" width="1.9" height="2.4" transform="rotate(45)"/><rect x="-0.95" y="-4.95" width="1.9" height="2.4" transform="rotate(90)"/><rect x="-0.95" y="-4.95" width="1.9" height="2.4" transform="rotate(135)"/><rect x="-0.95" y="-4.95" width="1.9" height="2.4" transform="rotate(180)"/><rect x="-0.95" y="-4.95" width="1.9" height="2.4" transform="rotate(225)"/><rect x="-0.95" y="-4.95" width="1.9" height="2.4" transform="rotate(270)"/><rect x="-0.95" y="-4.95" width="1.9" height="2.4" transform="rotate(315)"/></g><circle r="2.7" fill="none" stroke="#141414" stroke-width="1.7"/><path d="M4.8 2.2h3.6l-1.8 3.7z" fill="#141414"/></svg><div class="body" style="height:57px"></div><div class="sep" style="left:2px;top:26px"></div><svg class="abs" style="left:7px;top:33px" width="10" height="9" viewBox="0 0 10 9"><path d="M0.2 0.4 H9.4 L4.8 8.6 Z" fill="#777"/></svg><svg class="abs" style="left:19px;top:29px" width="13" height="15" viewBox="0 0 13 15"><path d="M0.5 0.5 H8.3 L12.3 4.3 V14.3 H0.5 Z" fill="#eff3f7" stroke="#7e7e7e" stroke-width="1"/><path d="M8.3 0.6 V4.3 H12.2" fill="#dde2e8" stroke="#9a9a9a" stroke-width="0.8"/><path d="M7.3 4.3 Q2.9 3.4 2.9 8 Q2.9 12.8 7.3 11.9" fill="none" stroke="#1b7fbd" stroke-width="1.3"/><path d="M7.3 5.7 V10.5 M9.5 5.7 V10.5 M6 7 H10.9 M6 9.2 H10.9" fill="none" stroke="#1b7fbd" stroke-width="0.8"/></svg><div class="cbb" style="left:35px;top:30px"></div><svg class="abs" style="left:35px;top:28px" width="15" height="15" viewBox="0 0 15 15"><path d="M2.6 8.2 L5.4 11 L12.6 2.4" fill="none" stroke="#000" stroke-width="2"/></svg><div class="btitle" style="top:29px;letter-spacing:0.46px">Send Trigger</div><svg class="abs" style="left:268.6px;top:29px" width="14" height="15" viewBox="0 0 14 15"><path d="M2 0.5 H12.4 Q13 0.5 13 1.1 V12.6 L11.2 13.9 L0.9 12.6 Q0.3 12.5 0.3 11.9 V2.2 Z" fill="#1a2c58"/><path d="M3.2 1.4 H12.1 V12.1 H3.2 Z" fill="#f6f8fb"/><path d="M1.2 2.7 L2.5 1.7 V12.3 L1.2 11.9 Z" fill="#a9c6f3"/><path d="M2.5 2.7 L10.9 3.2 V13 L2.5 12.2 Z" fill="#1a2c58"/><path d="M3 3.3 L10.3 3.8 V12.4 L3 11.7 Z" fill="url(#hb)"/><text x="6.7" y="10.9" font-family="DejaVu Sans, sans-serif" font-size="8.2" fill="#e9effb" text-anchor="middle">?</text></svg><svg class="abs" style="left:285px;top:28px" width="18" height="16" viewBox="-7 -7 18 16"><g fill="#141414"><rect x="-0.95" y="-4.95" width="1.9" height="2.4" transform="rotate(0)"/><rect x="-0.95" y="-4.95" width="1.9" height="2.4" transform="rotate(45)"/><rect x="-0.95" y="-4.95" width="1.9" height="2.4" transform="rotate(90)"/><rect x="-0.95" y="-4.95" width="1.9" height="2.4" transform="rotate(135)"/><rect x="-0.95" y="-4.95" width="1.9" height="2.4" transform="rotate(180)"/><rect x="-0.95" y="-4.95" width="1.9" height="2.4" transform="rotate(225)"/><rect x="-0.95" y="-4.95" width="1.9" height="2.4" transform="rotate(270)"/><rect x="-0.95" y="-4.95" width="1.9" height="2.4" transform="rotate(315)"/></g><circle r="2.7" fill="none" stroke="#141414" stroke-width="1.7"/><path d="M4.8 2.2h3.6l-1.8 3.7z" fill="#141414"/></svg><div class="lbl" style="top:45px;letter-spacing:0.681px">Target</div><svg class="abs" style="left:-18px;top:44px" width="27" height="18" viewBox="0 0 27 18"><path d="M3.6 1.3 H20.5 L25.3 9 L20.5 16.7 H3.6 Q0.6 16.7 0.6 13.7 V4.3 Q0.6 1.3 3.6 1.3 Z" fill="#2e4561" stroke="#78b8fa" stroke-width="1.05"/><path d="M6.3 3.6 H12 L17 9 L12 14.4 H6.3 L3.4 11.5 V6.5 Z" fill="none" stroke="#a6d6ff" stroke-width="0.85"/></svg><div class="fld" style="left:136px;top:45px;width:130px"><svg class="abs" style="left:2px;top:0px" width="13" height="13" viewBox="0 0 13 13"><circle cx="6" cy="6" r="4.4" fill="none" stroke="#1d9a1d" stroke-width="1.9"/><circle cx="6" cy="6" r="4.4" fill="none" stroke="#e6f020" stroke-width="1.3" stroke-dasharray="2.2 1.6"/><circle cx="6" cy="6" r="4.4" fill="none" stroke="#22e022" stroke-width="1.2" stroke-dasharray="1.2 2.6" stroke-dashoffset="2"/><rect x="6.6" y="8.4" width="5.6" height="3.8" fill="#0a0a0a"/><rect x="7.6" y="9.2" width="1.6" height="2" fill="#e8e8e8"/><rect x="10" y="9.6" width="1.6" height="1.8" fill="#e8e8e8"/></svg><span style="position:absolute;left:15.2px;top:0;letter-spacing:0.18px">MainMenu (ArborFS</span></div><svg class="abs" style="left:272.5px;top:47.4px" width="10" height="10" viewBox="-5 -5 10 10"><circle r="3.3" fill="none" stroke="#111" stroke-width="1"/><circle r="1.1" fill="#111"/></svg><svg class="abs" style="left:288.6px;top:49.6px" width="6" height="4" viewBox="0 0 6 4"><path d="M0.6 0.3 H5.4 L3 3.6 Z" fill="#111"/></svg><div class="lbl" style="top:63px;letter-spacing:0.114px">Message</div><svg class="abs" style="left:-18px;top:62px" width="27" height="18" viewBox="0 0 27 18"><path d="M3.6 1.3 H20.5 L25.3 9 L20.5 16.7 H3.6 Q0.6 16.7 0.6 13.7 V4.3 Q0.6 1.3 3.6 1.3 Z" fill="#5a2e60" stroke="#fb78fc" stroke-width="1.05"/><path d="M6.3 3.6 H12 L17 9 L12 14.4 H6.3 L3.4 11.5 V6.5 Z" fill="none" stroke="#ffa4ff" stroke-width="0.85"/></svg><div class="fld" style="left:136px;top:63px;width:148px"><span style="position:absolute;left:2.4px;top:0;letter-spacing:0.031px">End</span></div><svg class="abs" style="left:288.6px;top:67.6px" width="6" height="4" viewBox="0 0 6 4"><path d="M0.6 0.3 H5.4 L3 3.6 Z" fill="#111"/></svg></div>
<div class="abs" style="left:1035.4px;top:640px;font-weight:bold;font-size:29.2px;line-height:36px;color:rgba(255,255,255,0.29);white-space:nowrap;letter-spacing:0.06px">State Machine</div>
<svg class="abs" style="left:0;top:0" width="400" height="100" viewBox="0 0 400 100" opacity="0.6">
<title>Arbor 3: FSM &amp; BT Graph Editor</title>
<defs><linearGradient id="lg" x1="0" y1="15" x2="0" y2="51" gradientUnits="userSpaceOnUse">
<stop offset="0" stop-color="#7aa787"/><stop offset="0.2" stop-color="#8aaa8c"/><stop offset="0.45" stop-color="#cac79f"/><stop offset="0.62" stop-color="#cac79f"/><stop offset="0.85" stop-color="#84aa8c"/><stop offset="1" stop-color="#7aa787"/></linearGradient>
<linearGradient id="lg2" x1="0" y1="-19" x2="0" y2="19" gradientUnits="userSpaceOnUse" gradientTransform="rotate(23.4)">
<stop offset="0" stop-color="#7aa787"/><stop offset="0.45" stop-color="#cac79f"/><stop offset="0.62" stop-color="#cac79f"/><stop offset="1" stop-color="#7aa787"/></linearGradient></defs>
<g font-family="DejaVu Sans, sans-serif" font-weight="bold">
<text y="50" font-size="47.7" fill="url(#lg)" stroke="#050505" stroke-width="4.6" stroke-linejoin="round" paint-order="stroke"><tspan x="2.58" textLength="34.75" lengthAdjust="spacingAndGlyphs">A</tspan><tspan x="38.70" textLength="28.79" lengthAdjust="spacingAndGlyphs">r</tspan><tspan x="67.16" textLength="41.22" lengthAdjust="spacingAndGlyphs">b</tspan><tspan x="110.47" textLength="40.35" lengthAdjust="spacingAndGlyphs">o</tspan><tspan x="148.10" textLength="28.18" lengthAdjust="spacingAndGlyphs">r</tspan></text>
<text y="50" font-size="47.7" fill="url(#lg)" stroke="#050505" stroke-width="4.6" stroke-linejoin="round" paint-order="stroke"><tspan x="203.39" textLength="44.74" lengthAdjust="spacingAndGlyphs">3</tspan><tspan font-family="Liberation Serif, serif" font-weight="normal" font-size="80" x="241.2" y="50.7">:</tspan></text>
<text y="75.6" font-size="18.7" fill="#1a1a1a" stroke="#d4d4d4" stroke-width="4.2" stroke-linejoin="round" paint-order="stroke"><tspan x="45.13" textLength="48.74" lengthAdjust="spacingAndGlyphs">FSM</tspan> <tspan x="104.73" textLength="11.21" lengthAdjust="spacingAndGlyphs">&amp;</tspan> <tspan x="130.94" textLength="29.16" lengthAdjust="spacingAndGlyphs">BT</tspan> <tspan x="171.96" textLength="70.75" lengthAdjust="spacingAndGlyphs">Graph</tspan> <tspan x="252.80" textLength="77.78" lengthAdjust="spacingAndGlyphs">Editor</tspan></text>
</g>
<g transform="translate(291.4,27.2) rotate(-23.4)" opacity="0.55">
<rect x="-19" y="-19" width="38" height="38" fill="#050505"/></g>
<g transform="translate(290.2,25.6) rotate(-23.4)">
<rect x="-19" y="-19" width="38" height="38" fill="#050505"/>
<rect x="-17.2" y="-17.2" width="34.4" height="34.4" fill="url(#lg2)"/>
<rect x="-7.8" y="-7.8" width="15.6" height="15.6" fill="#050505"/>
<rect x="-6.2" y="-6.2" width="12.4" height="12.4" fill="#262626"/>
</g>
<g fill="none" stroke="#050505" stroke-width="3.6" opacity="0.5" transform="translate(1,1.5)">
<path d="M305.3 8.5 C318 3 324 10 332 16 C338 20 344 19.5 352 19"/><path d="M308.4 17 C322 16 326 26 333 36 C337 41 341 43 347 44"/>
</g>
<g fill="none" stroke="#7aa787" stroke-width="2">
<path d="M305.3 8.5 C318 3 324 10 332 16 C338 20 344 19.5 352 19"/><path d="M308.4 17 C322 16 326 26 333 36 C337 41 341 43 347 44"/>
</g>
<path d="M350 13 L372.6 14.7 L352 24.8 Z M346.3 38 L365.6 48.8 L343.2 48.8 Z" fill="#7aa787"/>
</svg>
<div id="vig"></div>
</div>
</body></html>
